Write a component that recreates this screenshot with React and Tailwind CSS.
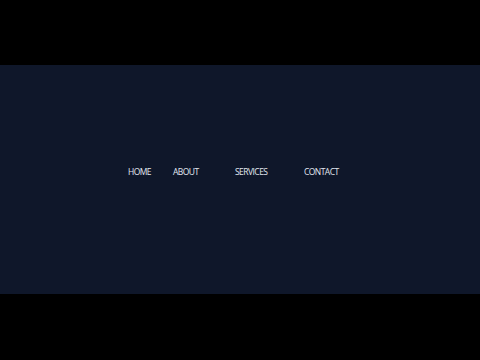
export default function App() {
  const links = [
    { label: 'HOME', w: 'w-[45px]' },
    { label: 'ABOUT', w: 'w-[62px]' },
    { label: 'SERVICES', w: 'w-[69px]' },
    { label: 'CONTACT', w: 'w-auto' },
  ];

  return (
    <div className="w-[480px] h-[360px] bg-black pt-[65px] font-['Open_Sans',sans-serif]">
      <div className="h-[229px] bg-[#0f172a] flex items-start pt-[101px] pl-[128px]">
        <nav className="flex items-center">
          {links.map((link) => (
            <a
              key={link.label}
              href="#"
              className={`${link.w} block text-[8.5px] leading-[12px] tracking-[-0.55px] text-[#e2e8f0]`}
            >
              {link.label}
            </a>
          ))}
        </nav>
      </div>
    </div>
  );
}
